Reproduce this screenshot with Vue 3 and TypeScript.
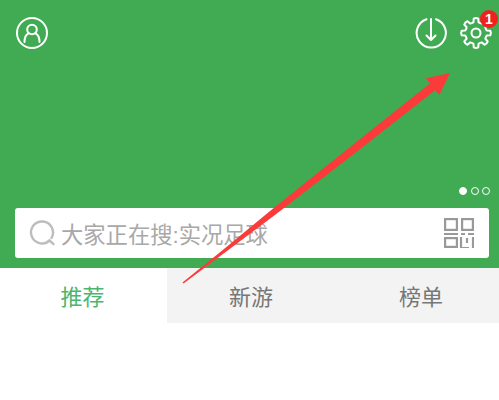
<script setup lang="ts">
interface TabItem {
  label: string;
  active?: boolean;
}

const tabs: TabItem[] = [
  { label: '推荐', active: true },
  { label: '新游' },
  { label: '榜单' },
];

// gear outline with rounded teeth around the centre of a 34px box
function gearPath(cx: number, cy: number, outer: number, inner: number, teeth: number): string {
  const step = (Math.PI * 2) / teeth;
  const pt = (r: number, a: number) => `${(cx + r * Math.cos(a)).toFixed(2)} ${(cy + r * Math.sin(a)).toFixed(2)}`;
  let d = '';
  for (let i = 0; i < teeth; i++) {
    const a = i * step - Math.PI / 2;
    const w = step * 0.2;
    const v = step * 0.3;
    d += `${i === 0 ? 'M' : 'L'}${pt(inner, a - v)} L${pt(outer, a - w)} Q${pt(outer + 1, a)} ${pt(outer, a + w)} L${pt(inner, a + v)} `;
    d += `Q${pt(inner - 0.6, a + step / 2)} ${pt(inner, a + step - v)} `;
  }
  return d + 'Z';
}

const gear = gearPath(17, 17, 14.5, 11, 8);
</script>

<template>
  <div class="page">
    <section class="banner">
      <div class="top-bar">
        <svg class="icon" width="34" height="34" viewBox="0 0 34 34" fill="none" stroke="#fff" stroke-width="2">
          <circle cx="17" cy="17" r="15" />
          <circle cx="17" cy="13.5" r="4.8" />
          <path d="M9.5 26c0-5 1.5-7.5 4.2-8.6M24.5 26c0-5-1.5-7.5-4.2-8.6" stroke-linecap="round" />
        </svg>
        <div class="top-right">
          <svg class="icon" width="34" height="34" viewBox="0 0 34 34" fill="none" stroke="#fff" stroke-width="2" stroke-linecap="round" stroke-linejoin="round">
            <path d="M12.5 3.2A14.6 14.6 0 1 0 22 3.2" />
            <path d="M17 3v21M12.5 19.5l4.5 4.5 4.5-4.5" />
          </svg>
          <div class="gear-wrap">
            <svg class="icon" width="34" height="34" viewBox="0 0 34 34" fill="none" stroke="#fff" stroke-width="2" stroke-linejoin="round">
              <path :d="gear" />
              <circle cx="17" cy="17" r="4.5" />
            </svg>
            <span class="badge">1</span>
          </div>
        </div>
      </div>

      <div class="dots">
        <span class="dot on"></span>
        <span class="dot"></span>
        <span class="dot"></span>
      </div>

      <div class="search">
        <svg class="search-icon" width="28" height="28" viewBox="0 0 28 28" fill="none" stroke="#bdbdbd" stroke-width="2.4" stroke-linecap="round">
          <path d="M21.5 21.5A11 11 0 1 1 23.5 19" />
          <path d="M21.5 21.5l4 3.6" />
        </svg>
        <span class="search-text">大家正在搜:实况足球</span>
        <svg class="qr" width="30" height="30" viewBox="0 0 30 30" fill="none" stroke="#999" stroke-width="2.2">
          <rect x="1.1" y="1.1" width="11.8" height="10.8" />
          <rect x="18.1" y="1.1" width="10.8" height="10.8" />
          <path d="M0 16h14M17 16h4M24 16h6" />
          <rect x="1.1" y="20.1" width="11.8" height="8.8" />
          <path d="M17 19v11h8M23 20v5M29 19v11" />
        </svg>
      </div>
    </section>

    <nav class="tabs">
      <div v-for="tab in tabs" :key="tab.label" class="tab" :class="{ active: tab.active }">{{ tab.label }}</div>
    </nav>

    <svg class="arrow" width="499" height="400" viewBox="0 0 499 400">
      <polygon
        points="182.5,282.4 224,249.1 273.1,208.6 364.5,135.5 430,83.5 426,78.3 450,73 439.3,95 435.1,90.3 369.5,141.7 276.9,213.4 226,251.7 183.5,283.6"
        fill="#fb3a3a"
      />
    </svg>
  </div>
</template>

<style scoped>
.page {
  position: relative;
  width: 499px;
  height: 400px;
  overflow: hidden;
  background: #fff;
  font-family: "Noto Sans CJK SC", "Noto Sans", sans-serif;
}

.banner {
  height: 268px;
  box-sizing: border-box;
  padding: 16px 10px 10px 15px;
  background: #41ab53;
  display: flex;
  flex-direction: column;
}

.top-bar {
  display: flex;
  align-items: center;
  justify-content: space-between;
  margin-right: -4px;
}

.top-right {
  display: flex;
  align-items: center;
  gap: 11px;
}

.icon {
  display: block;
}

.gear-wrap {
  position: relative;
}

.badge {
  position: absolute;
  top: -6px;
  right: -5px;
  width: 18px;
  height: 18px;
  border-radius: 50%;
  background: #f02020;
  color: #fff;
  font: 700 14px/18px "Liberation Sans", sans-serif;
  text-align: center;
}

.dots {
  margin-top: auto;
  margin-right: -1px;
  margin-bottom: 13px;
  display: flex;
  justify-content: flex-end;
  gap: 3.5px;
}

.dot {
  width: 8px;
  height: 8px;
  box-sizing: border-box;
  border-radius: 50%;
  border: 1.5px solid #fff;
}

.dot.on {
  background: #fff;
}

.search {
  height: 50px;
  box-sizing: border-box;
  padding: 0 15px 0 13px;
  background: #fff;
  border-radius: 3px;
  display: flex;
  align-items: center;
}

.search-icon {
  flex-shrink: 0;
  margin-right: 5px;
}

.search-text {
  flex: 1;
  font-family: "Liberation Sans", "Noto Sans CJK SC", sans-serif;
  font-size: 22.3px;
  color: #a8a8a8;
  white-space: nowrap;
}

.tabs {
  display: grid;
  grid-template-columns: 167px 168px 1fr;
  height: 55px;
}

.tab {
  display: flex;
  align-items: center;
  justify-content: center;
  padding-bottom: 2px;
  background: #f3f3f3;
  color: #777;
  font-size: 22px;
}

.tab:last-child {
  padding-left: 8px;
}

.tab.active {
  padding-right: 2px;
  background: #fff;
  color: #4cb56c;
}

.arrow {
  position: absolute;
  top: 0;
  left: 0;
  pointer-events: none;
}
</style>
